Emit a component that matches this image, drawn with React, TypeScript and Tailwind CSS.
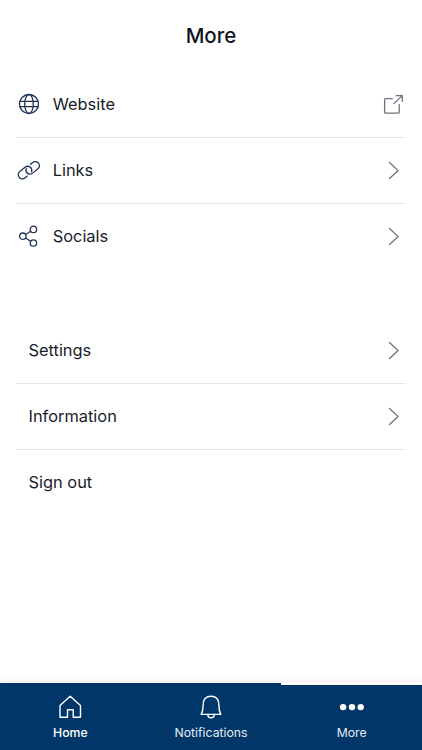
import type { ReactNode } from "react";

const svgProps = { fill: "none", stroke: "currentColor", strokeLinecap: "round", strokeLinejoin: "round" } as const;

function Globe() {
  return (
    <svg {...svgProps} width="24" height="24" viewBox="0 0 24 24" strokeWidth="1.3">
      <circle cx="12" cy="12" r="9.5" />
      <ellipse cx="12" cy="12" rx="4.3" ry="9.5" />
      <path d="M3.1 9.4h17.8M3.1 14.7h17.8" />
    </svg>
  );
}

function Chain() {
  const loop = "M-5.6 -3.5A4.1 4.1 0 0 0 -3.4 4.1H3.4A4.1 4.1 0 0 0 3.4 -4.1H0.4";
  return (
    <svg {...svgProps} width="24" height="24" viewBox="0 0 24 24" strokeWidth="1.3">
      <path d={loop} transform="translate(15.7 9.8) rotate(-39)" />
      <path d={loop} transform="translate(8 14.6) rotate(141)" />
    </svg>
  );
}

function Share() {
  return (
    <svg {...svgProps} width="24" height="24" viewBox="0 0 24 24" strokeWidth="1.3">
      <circle cx="5.8" cy="12.2" r="3.2" />
      <circle cx="16.4" cy="5.4" r="3.2" />
      <circle cx="16.4" cy="19" r="3.2" />
      <path d="M8.6 10.5l5.1-3.3M8.6 14l5.1 3.3" />
    </svg>
  );
}

function External() {
  return (
    <svg {...svgProps} className="text-[#6d717b]" width="24" height="24" viewBox="0 0 24 24" strokeWidth="1.3" strokeLinecap="butt" strokeLinejoin="miter">
      <path d="M11.8 6.6H4.6a1 1 0 0 0-1 1v12.6a1 1 0 0 0 1 1h12.6a1 1 0 0 0 1-1V12" />
      <path d="M12.4 12.1l8.8-8.5M14.7 3.6h6.6v6.4" />
    </svg>
  );
}

function Chevron() {
  return (
    <svg {...svgProps} className="text-[#6d717b]" width="24" height="24" viewBox="0 0 24 24" strokeWidth="1.3">
      <path d="M8.5 4.5l8.6 8.1-8.6 8" />
    </svg>
  );
}

function Home() {
  return (
    <svg {...svgProps} width="28" height="28" viewBox="0 0 28 28" strokeWidth="1.4">
      <path d="M4 12.6L14.2 3.2l10.3 9.4v11.7h-7.3v-7.6h-5.7v7.6H4z" />
    </svg>
  );
}

function Bell() {
  return (
    <svg {...svgProps} width="28" height="28" viewBox="0 0 28 28" strokeWidth="1.4">
      <path d="M4.2 21.4c1.5-2.7 1.9-5 1.9-9.2C6.1 6 9.2 3.2 14 3.2s7.9 2.8 7.9 9c0 4.2.4 6.5 1.9 9.2z" />
      <path d="M10.8 21.5a3.2 3.2 0 0 0 6.4 0" />
    </svg>
  );
}

function Dots() {
  return (
    <svg width="28" height="28" viewBox="0 0 28 28" fill="currentColor">
      <circle cx="5.1" cy="14.1" r="3.2" />
      <circle cx="14" cy="14.1" r="3.2" />
      <circle cx="22.7" cy="14.1" r="3.2" />
    </svg>
  );
}

function Row({ label, icon, end, line = true }: { label: string; icon?: ReactNode; end?: ReactNode; line?: boolean }) {
  return (
    <li className={`flex h-[66px] items-center border-b pr-px pb-px ${line ? "border-[#e6e6e9]" : "border-transparent"}`}>
      {icon ? <span className="mr-3 ml-[0.7px] text-[#203456]">{icon}</span> : <span className="w-[12.5px]" />}
      <span className="flex-1 text-[16.4px] leading-6">{label}</span>
      {end}
    </li>
  );
}

function Tab({ label, icon, bold = false }: { label: string; icon: ReactNode; bold?: boolean }) {
  return (
    <button className="flex flex-1 flex-col items-center pt-2">
      {icon}
      <span className={`mt-1 text-[12.25px] leading-4 ${bold ? "font-medium" : "font-normal text-[#e4ebf4]"}`}>{label}</span>
    </button>
  );
}

export default function App() {
  return (
    <div className="flex h-[750px] w-[422px] flex-col bg-white font-['Inter',sans-serif] text-[#191c2b]">
      <header className="flex h-[72px] items-center justify-center pb-px">
        <h1 className="text-[20.5px] leading-7 font-medium text-[#111423]">More</h1>
      </header>
      <main className="flex-1 px-4">
        <ul>
          <Row label="Website" icon={<Globe />} end={<External />} />
          <Row label="Links" icon={<Chain />} end={<Chevron />} />
          <Row label="Socials" icon={<Share />} end={<Chevron />} line={false} />
        </ul>
        <ul className="mt-12">
          <Row label="Settings" end={<Chevron />} />
          <Row label="Information" end={<Chevron />} />
          <Row label="Sign out" line={false} />
        </ul>
      </main>
      <footer className="h-[67px] bg-[#003768] text-white shadow-[0_-2px_8px_rgba(0,0,0,0.08)]">
        <div className="flex h-[2px]">
          <span className="w-[281px]" />
          <span className="flex-1 bg-white" />
        </div>
        <nav className="flex">
          <Tab label="Home" icon={<Home />} bold />
          <Tab label="Notifications" icon={<Bell />} />
          <Tab label="More" icon={<Dots />} />
        </nav>
      </footer>
    </div>
  );
}
